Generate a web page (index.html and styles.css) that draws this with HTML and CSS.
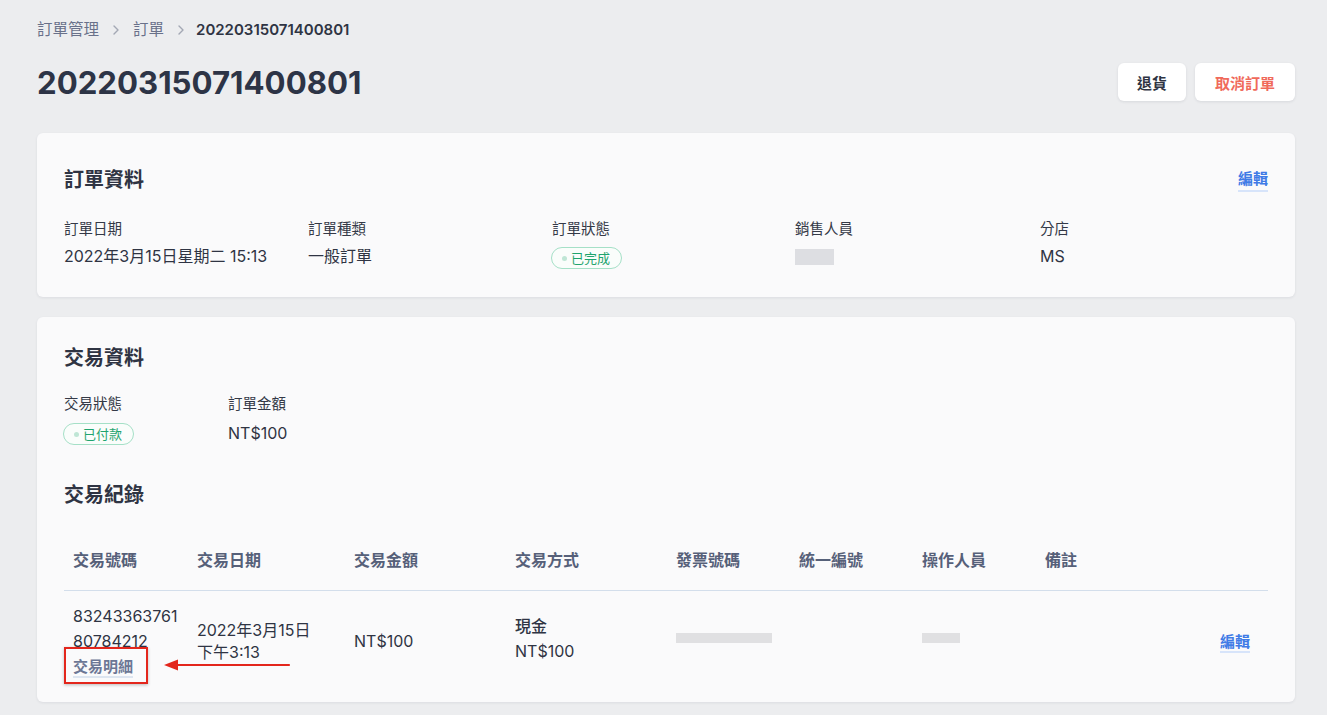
FILE: index.html
```html
<!DOCTYPE html>
<html lang="zh-Hant">
<head>
<meta charset="utf-8">
<title>20220315071400801</title>
<link rel="stylesheet" href="styles.css">
</head>
<body>
<div class="page">
  <nav class="crumbs">
    <span class="crumb">訂單管理</span>
    <svg class="sep" width="8" height="12" viewBox="0 0 8 12"><path d="M2 2l4 4-4 4" fill="none" stroke="#A3A8B4" stroke-width="1.4" stroke-linecap="round" stroke-linejoin="round"/></svg>
    <span class="crumb">訂單</span>
    <svg class="sep" width="8" height="12" viewBox="0 0 8 12"><path d="M2 2l4 4-4 4" fill="none" stroke="#A3A8B4" stroke-width="1.4" stroke-linecap="round" stroke-linejoin="round"/></svg>
    <span class="crumb current">20220315071400801</span>
  </nav>

  <header class="title-row">
    <h1 class="page-title">20220315071400801</h1>
    <div class="actions">
      <button class="btn">退貨</button>
      <button class="btn danger">取消訂單</button>
    </div>
  </header>

  <section class="card card-order">
    <div class="card-head">
      <h2 class="card-title">訂單資料</h2>
      <a class="link-edit">編輯</a>
    </div>
    <div class="info-grid order-grid">
      <div class="field"><div class="label">訂單日期</div><div class="value">2022年3月15日星期二 15:13</div></div>
      <div class="field"><div class="label">訂單種類</div><div class="value">一般訂單</div></div>
      <div class="field"><div class="label">訂單狀態</div><div class="value"><span class="badge"><i class="dot"></i>已完成</span></div></div>
      <div class="field"><div class="label">銷售人員</div><div class="value"><span class="blur blur-sales"></span></div></div>
      <div class="field"><div class="label">分店</div><div class="value">MS</div></div>
    </div>
  </section>

  <section class="card card-trade">
    <h2 class="card-title">交易資料</h2>
    <div class="info-grid trade-grid">
      <div class="field"><div class="label">交易狀態</div><div class="value"><span class="badge"><i class="dot"></i>已付款</span></div></div>
      <div class="field"><div class="label">訂單金額</div><div class="value">NT$100</div></div>
    </div>

    <h2 class="card-title records-title">交易紀錄</h2>
    <div class="table">
      <div class="tr th-row">
        <div class="th">交易號碼</div>
        <div class="th">交易日期</div>
        <div class="th">交易金額</div>
        <div class="th">交易方式</div>
        <div class="th">發票號碼</div>
        <div class="th">統一編號</div>
        <div class="th">操作人員</div>
        <div class="th">備註</div>
      </div>
      <div class="tr body-row">
        <div class="td id-cell">
          <div class="trade-no">83243363761<wbr>80784212</div>
          <div class="detail-wrap">
            <a class="link-detail">交易明細</a>
            <span class="annot-box"></span>
            <svg class="annot-arrow" width="130" height="14" viewBox="0 0 130 14"><path d="M14 7H126" stroke="#E3261C" stroke-width="2.2" stroke-linecap="round"/><path d="M1 7L15 1.5V12.5Z" fill="#E3261C"/></svg>
          </div>
        </div>
        <div class="td date-cell">2022年3月15日<br>下午3:13</div>
        <div class="td">NT$100</div>
        <div class="td method-cell"><div class="method">現金</div><div>NT$100</div></div>
        <div class="td"><span class="blur blur-invoice"></span></div>
        <div class="td"></div>
        <div class="td"><span class="blur blur-op"></span></div>
        <div class="td edit-cell"><a class="link-edit">編輯</a></div>
      </div>
    </div>
  </section>
</div>
</body>
</html>
```

FILE: styles.css
```css
* { box-sizing: border-box; }

html, body {
  margin: 0;
  padding: 0;
  background: #ECEDEF;
}

body {
  font-family: Inter, "Noto Sans CJK TC", "Noto Sans CJK SC", sans-serif;
  color: #2F3443;
  width: 1327px;
  height: 715px;
  overflow: hidden;
}

.page {
  padding: 18px 32px 0 37px;
}

/* breadcrumb */
.crumbs {
  display: flex;
  align-items: center;
  gap: 13px;
  height: 24px;
  font-size: 15.5px;
  line-height: 24px;
}
.crumb { color: #69718A; }
.crumb.current { color: #2F3443; font-weight: 600; font-size: 15px; margin-left: -2px; }
.sep { display: block; }

/* title row */
.title-row {
  display: flex;
  align-items: center;
  justify-content: space-between;
  margin-top: 21px;
  height: 40px;
}
.page-title {
  margin: 0;
  font-size: 31.2px;
  font-weight: 700;
  color: #2D3446;
  line-height: 42px;
}
.actions {
  display: flex;
  gap: 9px;
  margin-top: -2px;
}
.btn {
  height: 38px;
  padding: 0 19px;
  border: none;
  border-radius: 6px;
  background: #FFFFFF;
  box-shadow: 0 1px 3px rgba(30, 40, 60, 0.10);
  font-family: inherit;
  font-size: 15px;
  font-weight: 700;
  color: #2F3443;
}
.btn.danger { color: #F06A5B; padding: 0 20px; }

/* cards */
.card {
  background: #FAFAFB;
  border-radius: 6px;
  box-shadow: 0 1px 3px rgba(30, 40, 60, 0.08);
  padding: 24px 27px;
}
.card-order {
  margin-top: 30px;
  padding-bottom: 30px;
}
.card-trade {
  margin-top: 20px;
  padding-top: 25px;
  padding-bottom: 9px;
}
.card-head {
  display: flex;
  justify-content: space-between;
  align-items: center;
  padding-top: 7px;
}
.card-title {
  margin: 0;
  font-size: 20px;
  font-weight: 700;
  line-height: 32px;
  color: #2F3443;
}
.link-edit {
  font-size: 15px;
  font-weight: 700;
  color: #3F7BE6;
  line-height: 22px;
  border-bottom: 2px solid #D7E4FA;
  cursor: pointer;
}

/* info grids */
.info-grid { display: grid; }
.order-grid {
  grid-template-columns: 244px 244px 243px 245px 1fr;
  margin-top: 23px;
}
.trade-grid {
  grid-template-columns: 164px 1fr;
  margin-top: 20px;
}
.label {
  font-size: 14.5px;
  line-height: 20px;
  color: #343947;
}
.value {
  font-size: 16px;
  line-height: 22px;
  margin-top: 6px;
  color: #2F3443;
  display: flex;
  align-items: center;
  height: 22px;
}
.trade-grid .value { margin-top: 8px; }

.badge {
  display: inline-flex;
  align-items: center;
  height: 22px;
  padding: 0 11px 0 10px;
  border: 1px solid #A5E0C7;
  border-radius: 11px;
  font-size: 13px;
  color: #1FA46E;
  margin-left: -1px;
  margin-top: 4px;
  background: #FAFDFB;
}
.trade-grid .badge { margin-top: 2px; }
.dot {
  width: 5px;
  height: 5px;
  border-radius: 50%;
  background: #BFE6D5;
  margin-right: 4px;
}

.blur {
  display: inline-block;
  background: #DDDEE2;
}
.blur-sales { width: 39px; height: 16px; margin-top: 2px; }
.blur-invoice { width: 96px; height: 10px; background: #E0E0E2; margin-bottom: 4px; }
.blur-op { width: 38px; height: 10px; background: #E0E0E2; margin-bottom: 4px; }

/* records */
.records-title { margin-top: 35px; }

.table { margin-top: 18px; }
.tr {
  display: grid;
  grid-template-columns: 124px 157px 161px 161px 123px 123px 123px 1fr;
}
.th-row {
  height: 62px;
  align-items: center;
  border-bottom: 1px solid #D3DEEB;
}
.th {
  padding-left: 9px;
  font-size: 16px;
  font-weight: 700;
  color: #566079;
  line-height: 20px;
}
.body-row {
  padding: 13px 0 15px;
  align-items: center;
}
.td {
  padding-left: 9px;
  font-size: 16px;
  line-height: 24px;
  color: #2F3443;
}
.trade-no {
  width: 112px;
  line-height: 25px;
}
.detail-wrap {
  position: relative;
  display: inline-block;
}
.link-detail {
  font-size: 15px;
  font-weight: 700;
  color: #6C7795;
  line-height: 22px;
  border-bottom: 2px solid #DDE5F0;
  cursor: pointer;
}
.annot-box {
  position: absolute;
  left: -9px;
  top: -7px;
  width: 84px;
  height: 37px;
  border: 2px solid #E3261C;
  box-shadow: 0 1px 3px rgba(0, 0, 0, 0.25);
}
.annot-arrow {
  position: absolute;
  left: 90px;
  top: 4px;
}
.date-cell { line-height: 22px; margin-top: -1px; }
.method { font-weight: 500; }
.method-cell { line-height: 25px; margin-top: -4px; }
.edit-cell {
  text-align: right;
  padding-right: 18px;
}
```
